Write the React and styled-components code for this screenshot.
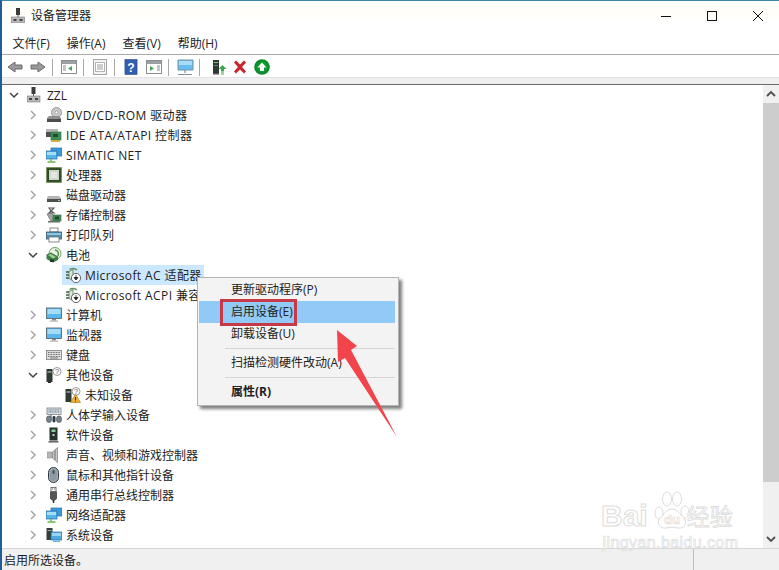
import * as React from 'react'
import styled, { createGlobalStyle } from 'styled-components'

const Global = createGlobalStyle`
  html, body { margin: 0; padding: 0; background: #fff; }
  body { font-family: "Open Sans", "Noto Sans CJK SC", sans-serif; font-size: 12px; color: #1c1c1c; }
`

const Window = styled.div`
  position: relative;
  width: 779px;
  height: 570px;
  overflow: hidden;
  background: #fff;
  box-sizing: border-box;
  border-top: 1px solid #3f86a8;
  border-left: 2px solid #1f5c9c;
  display: flex;
  flex-direction: column;
`

const TitleBar = styled.div`
  height: 29px;
  flex: none;
  display: flex;
  align-items: center;
  padding: 0 0 0 9px;
  background: linear-gradient(#fff 0, #fffef6 40%, #fff 70%);
`

const TitleText = styled.span`
  margin-left: 6px;
  font-size: 12px;
  margin-top: -1px;
`

const Caption = styled.div`
  margin-left: auto;
  margin-right: -2px;
  display: flex;
`

const CaptionButton = styled.div`
  width: 46px;
  height: 29px;
  display: flex;
  align-items: center;
  justify-content: center;
  color: #111;
`

const MenuBar = styled.div`
  height: 22px;
  padding: 2px 0 0 2px;
  flex: none;
  display: flex;
  align-items: center;
  border-bottom: 1px solid #a9a9a9;
`

const MenuName = styled.span`
  padding: 0 8.5px;
  color: #222;
`

const ToolBar = styled.div`
  height: 20px;
  flex: none;
  display: flex;
  align-items: center;
  padding: 2px 0 0 5px;
`

const ToolIcon = styled.span`
  display: flex;
  justify-content: center;
  width: ${p => p.$w}px;
  margin-right: ${p => p.$m}px;
`

const ToolSep = styled.span`
  width: 1px;
  height: 17px;
  background: #a8a8a8;
  margin-right: ${p => p.$m}px;
`

const Band = styled.div`
  height: 6px;
  flex: none;
  background: #efefef;
  border-top: 1px solid #e2e2e2;
  border-bottom: 1px solid #6a6a6a;
`

const Middle = styled.div`
  flex: 1;
  display: flex;
  min-height: 0;
`

const Tree = styled.div`
  flex: 1;
`

const Row = styled.div`
  height: 20px;
  display: flex;
  align-items: center;
  padding-left: ${p => 2 + p.$level * 19}px;
  white-space: nowrap;
`

const Chevron = styled.span`
  width: 20px;
  flex: none;
  display: flex;
  justify-content: center;
  color: ${p => (p.$open ? '#444' : '#a6a6a6')};
`

const Node = styled.span`
  display: flex;
  align-items: center;
  height: 20px;
  padding-right: 2px;
  background: ${p => (p.$selected ? '#cce8ff' : 'transparent')};
`

const IconSlot = styled.span`
  width: 20px;
  flex: none;
  padding-left: 3px;
  display: flex;
`

const Label = styled.span`
  color: #222;
  letter-spacing: ${p => (p.$latin ? '0.4px' : '0')};
`

const ScrollBar = styled.div`
  width: 16px;
  flex: none;
  background: #f0f0f0;
  display: flex;
  flex-direction: column;
  align-items: center;
`

const ScrollButton = styled.div`
  height: 18px;
  width: 100%;
  display: flex;
  align-items: center;
  justify-content: center;
  flex: none;
`

const Thumb = styled.div`
  width: 100%;
  height: 379px;
  background: #cdcdcd;
  flex: none;
`

const ScrollSpace = styled.div`
  flex: 1;
`

const StatusBar = styled.div`
  height: 21px;
  flex: none;
  background: #f0f0f0;
  border-top: 1px solid #d7d7d7;
  margin-left: -2px;
  padding-left: 4px;
  display: grid;
  grid-template-columns: 689px 1fr;
  align-items: center;
`

const StatusCell = styled.span`
  height: 100%;
  display: flex;
  align-items: center;
  &:last-child { border-left: 1px solid #bcbcbc; }
`

const ContextMenu = styled.div`
  position: absolute;
  left: 195px;
  top: 276px;
  width: 200px;
  height: 126px;
  background: #f3f3f3;
  border: 1px solid #b4b4b4;
  box-shadow: 3px 3px 3px rgba(0, 0, 0, 0.5);
  padding-top: 1px;
`

const Item = styled.div`
  position: relative;
  height: 20px;
  padding: 0 0 2px 32px;
  display: flex;
  align-items: center;
  margin: 0 3px 0 1px;
  color: #222;
  font-weight: ${p => (p.$bold ? 700 : 400)};
  background: ${p => (p.$active ? '#91c9f7' : 'transparent')};
`

const ItemSep = styled.div`
  height: 1px;
  margin: 3px 3px 3px 27px;
  background: #d4d4d4;
`

const RedBox = styled.div`
  position: absolute;
  left: 21px;
  top: -2px;
  width: 71px;
  height: 21px;
  border: 3px solid #c63a48;
`

const ArrowMark = styled.svg`
  position: absolute;
  left: 328px;
  top: 320px;
`

const Watermark = styled.div`
  position: absolute;
  left: 596px;
  top: 486px;
  width: 145px;
  display: flex;
  flex-direction: column;
  pointer-events: none;
  color: #fff;
  -webkit-text-stroke: 1px #dcdcdc;
  font-family: "Liberation Sans", "Noto Sans CJK SC", sans-serif;
`

const MarkLine = styled.div`
  display: flex;
  align-items: flex-end;
  height: 46px;
`

const MarkBig = styled.span`
  font-size: 30px;
  font-weight: 700;
  line-height: 34px;
  margin-left: 3px;
`

const MarkCn = styled.span`
  font-size: 23px;
  line-height: 32px;
  margin-left: -3px;
  -webkit-text-stroke: 0.8px #dcdcdc;
`

const MarkUrl = styled.div`
  font-size: 16px;
  line-height: 18px;
  margin-top: 1px;
  letter-spacing: 0.4px;
  text-align: center;
  -webkit-text-stroke: 0.7px #dcdcdc;
`

const Svg = ({ w = 16, h = 16, vb, children }) => (
  <svg width={w} height={h} viewBox={vb || `0 0 ${w} ${h}`} style={{ display: 'block' }}>
    {children}
  </svg>
)

const PcTower = ({ x = 0 }) => (
  <g transform={`translate(${x} 0)`}>
    <rect x="1" y="1" width="6" height="13" fill="#2c3a33" />
    <rect x="2" y="3" width="4" height="1" fill="#7fc48a" />
    <rect x="2" y="6" width="4" height="1" fill="#6c7a74" />
  </g>
)

const icons = {
  root: (
    <>
      <rect x="4.5" y="0" width="4" height="7" fill="#3c3c3c" />
      <rect x="6" y="7" width="1" height="2" fill="#555" />
      <rect x="0" y="9" width="13" height="6" fill="#b9b9b9" stroke="#7a7a7a" strokeWidth="0.6" />
      <rect x="2" y="11" width="3" height="2" fill="#444" />
      <rect x="8" y="11" width="3" height="2" fill="#444" />
    </>
  ),
  dvd: (
    <>
      <circle cx="10.5" cy="5.5" r="5" fill="#c9c9c9" stroke="#9a9a9a" />
      <circle cx="10.5" cy="5.5" r="1.5" fill="#fff" stroke="#8a8a8a" strokeWidth="0.6" />
      <path d="M3 9h10l2 2v4H1v-4z" fill="#8e8e8e" />
      <rect x="1" y="12" width="14" height="3" fill="#4c4c4c" />
    </>
  ),
  ide: (
    <>
      <rect x="0" y="2" width="12" height="3" fill="#b5b5b5" />
      <rect x="0" y="5" width="12" height="5" fill="#4f4f4f" />
      <rect x="5" y="5" width="10" height="8" fill="#3f8f57" stroke="#2f6d3e" strokeWidth="0.6" />
      <rect x="7" y="7" width="5" height="3" fill="#22492c" />
      <rect x="5" y="13" width="9" height="2" fill="#d0b040" />
    </>
  ),
  net: (
    <>
      <rect x="5" y="1" width="11" height="8" fill="#3d9ad9" stroke="#1f6aa6" strokeWidth="0.7" />
      <rect x="0" y="4" width="11" height="8" fill="#57b3ea" stroke="#1f6aa6" strokeWidth="0.7" />
      <rect x="1" y="5" width="9" height="3" fill="#a6dcf6" />
      <path d="M5 12v2M1.5 15h8" stroke="#63b84f" strokeWidth="1.6" />
    </>
  ),
  cpu: (
    <>
      <rect x="0.5" y="0.5" width="15" height="15" fill="#3d5a2b" stroke="#5a7a3a" strokeDasharray="1 1" />
      <rect x="1.5" y="1.5" width="13" height="13" fill="#2e4a22" />
      <rect x="3" y="3" width="10" height="10" fill="#cdd5cc" />
      <rect x="5" y="5" width="6" height="6" fill="#e2e7e1" />
    </>
  ),
  disk: (
    <>
      <path d="M2 9h11l2 2v4H1v-4z" fill="#b4b4b4" />
      <rect x="1" y="12" width="14" height="3" fill="#4e4e4e" />
      <rect x="12" y="13" width="2" height="1" fill="#8adf8a" />
    </>
  ),
  storage: (
    <>
      <path d="M3 1h5l-3 3 3 2H3l2-2z" fill="none" stroke="#555" strokeWidth="1.1" />
      <path d="M1 7l4-1 6 5v3H5z" fill="#a5a5a5" stroke="#5a5a5a" strokeWidth="0.6" />
      <rect x="7" y="8" width="8" height="6" fill="#3f8f57" stroke="#2f6d3e" strokeWidth="0.6" />
      <rect x="9" y="9.5" width="4" height="3" fill="#22492c" />
      <rect x="2" y="14" width="12" height="1.5" fill="#6b6b6b" />
    </>
  ),
  printer: (
    <>
      <rect x="4" y="1" width="8" height="4" fill="#fff" stroke="#6f6f6f" strokeWidth="0.8" />
      <rect x="0.5" y="5" width="15" height="7" fill="#4e93b5" stroke="#36566a" strokeWidth="0.8" />
      <rect x="1" y="6" width="14" height="2" fill="#8fc6dd" />
      <rect x="3" y="10" width="10" height="5" fill="#fff" stroke="#6f6f6f" strokeWidth="0.8" />
    </>
  ),
  battery: (
    <>
      <circle cx="9" cy="6.5" r="6" fill="#e8f3e4" stroke="#6d9f63" />
      <path d="M9 3c3 .5 4 3 3 6" fill="none" stroke="#4d8f45" strokeWidth="1.4" />
      <path d="M0.500 7.500l4.500-2 7 4v3.500l-5 2.500-6.500-3.500z" fill="#3a7e43" />
      <path d="M2 8l3-1 5 3-3 1.500z" fill="#9fd09a" />
      <rect x="4" y="12.500" width="4" height="2.500" fill="#26362a" />
    </>
  ),
  adapter: (
    <>
      <path d="M4.500 2.500C6.500 1 10 1 12 3" fill="none" stroke="#6a8f63" strokeWidth="1.400" />
      <path d="M1 5h3M1 8h3M1 11h3" stroke="#3f5a42" strokeWidth="1.300" />
      <path d="M4 4.500l4-2v11l-4-2z" fill="#dce9d9" stroke="#55775a" strokeWidth="0.800" />
      <circle cx="11" cy="11" r="4.600" fill="#fff" stroke="#666" />
      <path d="M11 8v4M9 10.500l2 2.500 2-2.500z" fill="#222" stroke="#222" strokeWidth="0.800" />
    </>
  ),
  monitor: (
    <>
      <rect x="0.5" y="1" width="15" height="10.5" fill="#59b7ee" stroke="#4d5d68" strokeWidth="0.8" />
      <rect x="1.5" y="2" width="13" height="5" fill="#a6dcf6" />
      <rect x="6" y="12" width="4" height="1.5" fill="#8a8a8a" />
      <rect x="4" y="13.5" width="8" height="1.2" fill="#b2b2b2" />
    </>
  ),
  keyboard: (
    <>
      <rect x="0.5" y="3.5" width="15" height="9" fill="#dedede" stroke="#7d7d7d" strokeWidth="0.8" />
      <path d="M2 5.500h12M2 7.500h12M2 9.500h12" stroke="#6f6f6f" strokeDasharray="1 .6" />
      <rect x="4" y="10.5" width="8" height="1" fill="#7a7a7a" />
    </>
  ),
  other: (
    <>
      <rect x="0.5" y="2" width="6" height="13" fill="#2c3a33" />
      <rect x="1.5" y="4" width="4" height="2" fill="#7c8a84" />
      <rect x="2" y="15" width="3" height="1" fill="#222" />
      <circle cx="11" cy="4.5" r="4" fill="#fff" stroke="#9a9a9a" />
      <text x="11" y="7.3" fontSize="7.5" textAnchor="middle" fill="#555" fontFamily="Liberation Sans">?</text>
    </>
  ),
  unknown: (
    <>
      <rect x="0.5" y="2" width="6" height="13" fill="#2c3a33" />
      <rect x="1.5" y="4" width="4" height="2" fill="#7c8a84" />
      <circle cx="11" cy="4.5" r="4" fill="#fff" stroke="#9a9a9a" />
      <text x="11" y="7.3" fontSize="7.5" textAnchor="middle" fill="#555" fontFamily="Liberation Sans">?</text>
      <path d="M10.5 7l5 8.500h-10z" fill="#f2b233" stroke="#a8741a" strokeWidth="0.6" />
      <rect x="10" y="10" width="1" height="3" fill="#222" />
      <rect x="10" y="13.6" width="1" height="1" fill="#222" />
    </>
  ),
  hid: (
    <>
      <rect x="1" y="1" width="14" height="6.5" fill="#d7dde0" stroke="#7d8488" strokeWidth="0.8" />
      <path d="M2.500 3h11M2.500 5h11" stroke="#5e7482" strokeDasharray="1 .6" />
      <path d="M5 7.500v3" stroke="#555" />
      <rect x="0.5" y="9" width="5" height="6.5" rx="2.4" fill="#76838b" stroke="#3f474c" strokeWidth="0.6" />
      <rect x="6.5" y="9" width="3" height="6.5" rx="1.4" fill="#2f3a42" />
      <rect x="10.5" y="9" width="5" height="6.5" rx="2.4" fill="#76838b" stroke="#3f474c" strokeWidth="0.6" />
    </>
  ),
  software: (
    <>
      <rect x="3.5" y="0.5" width="8" height="13" fill="#25332c" />
      <rect x="5.5" y="2.5" width="4" height="2.5" fill="#8ad09a" />
      <rect x="6.5" y="7" width="2" height="2" fill="#c5d0ca" />
      <rect x="2.5" y="14" width="10" height="1.6" fill="#6d6d6d" />
    </>
  ),
  speaker: (
    <>
      <rect x="1.5" y="5" width="5" height="6" fill="#b5b5b5" stroke="#8a8a8a" strokeWidth="0.6" />
      <path d="M6.500 5l5-4.500v15l-5-4.500z" fill="#c9c9c9" stroke="#7f7f7f" strokeWidth="0.7" />
      <path d="M9 3v10" stroke="#8e8e8e" strokeWidth="1.5" />
    </>
  ),
  mouse: (
    <>
      <rect x="2.5" y="0.5" width="10" height="15" rx="5" fill="#a9b4bc" stroke="#2d3439" />
      <rect x="4" y="2" width="7" height="12" rx="3.5" fill="#8e9aa3" />
      <rect x="6.5" y="3" width="2" height="4" rx="1" fill="#444e55" />
    </>
  ),
  usb: (
    <>
      <rect x="5" y="0.5" width="5" height="4" fill="#fff" stroke="#555" strokeWidth="0.8" />
      <rect x="6" y="1.5" width="1" height="1" fill="#555" />
      <rect x="8" y="1.5" width="1" height="1" fill="#555" />
      <path d="M4 4.500h7v7l-2 2H6l-2-2z" fill="#555" />
      <path d="M7.500 13v3" stroke="#333" strokeWidth="1.6" />
    </>
  ),
  system: (
    <>
      <rect x="0.5" y="1" width="6" height="12" fill="#33403a" />
      <rect x="1.5" y="3" width="4" height="1" fill="#9aa69f" />
      <rect x="5" y="5" width="11" height="8" fill="#4ea9e2" stroke="#2b6f9f" strokeWidth="0.7" />
      <rect x="6" y="6" width="9" height="3" fill="#9ad4f3" />
      <rect x="7" y="13.5" width="7" height="1.5" fill="#6fb4dc" />
    </>
  ),
}

const rows = [
  { level: 0, icon: 'root', label: 'ZZL', open: true },
  { level: 1, icon: 'dvd', label: 'DVD/CD-ROM 驱动器', latin: true },
  { level: 1, icon: 'ide', label: 'IDE ATA/ATAPI 控制器', latin: true },
  { level: 1, icon: 'net', label: 'SIMATIC NET', latin: true },
  { level: 1, icon: 'cpu', label: '处理器' },
  { level: 1, icon: 'disk', label: '磁盘驱动器' },
  { level: 1, icon: 'storage', label: '存储控制器' },
  { level: 1, icon: 'printer', label: '打印队列' },
  { level: 1, icon: 'battery', label: '电池', open: true },
  { level: 2, icon: 'adapter', label: 'Microsoft AC 适配器', latin: true, leaf: true, selected: true },
  { level: 2, icon: 'adapter', label: 'Microsoft ACPI 兼容', latin: true, leaf: true },
  { level: 1, icon: 'monitor', label: '计算机' },
  { level: 1, icon: 'monitor', label: '监视器' },
  { level: 1, icon: 'keyboard', label: '键盘' },
  { level: 1, icon: 'other', label: '其他设备', open: true },
  { level: 2, icon: 'unknown', label: '未知设备', leaf: true },
  { level: 1, icon: 'hid', label: '人体学输入设备' },
  { level: 1, icon: 'software', label: '软件设备' },
  { level: 1, icon: 'speaker', label: '声音、视频和游戏控制器' },
  { level: 1, icon: 'mouse', label: '鼠标和其他指针设备' },
  { level: 1, icon: 'usb', label: '通用串行总线控制器' },
  { level: 1, icon: 'net', label: '网络适配器' },
  { level: 1, icon: 'system', label: '系统设备' },
]

const Arrow = ({ open }) =>
  open ? (
    <Svg w={10} h={10}>
      <path d="M1 3l4 4 4-4" fill="none" stroke="currentColor" strokeWidth="1.5" />
    </Svg>
  ) : (
    <Svg w={10} h={10}>
      <path d="M3 1l4 4-4 4" fill="none" stroke="currentColor" strokeWidth="1.5" />
    </Svg>
  )

const TreeRow = ({ level, icon, label, open, leaf, selected, latin }) => (
  <Row $level={level}>
    <Chevron $open={open}>{leaf ? null : <Arrow open={open} />}</Chevron>
    <Node $selected={selected}>
      <IconSlot>
        <Svg>{icons[icon]}</Svg>
      </IconSlot>
      <Label $latin={latin}>{label}</Label>
    </Node>
  </Row>
)

const tools = [
  {
    w: 16, m: 7,
    svg: <path d="M1 8l7-5v3h7v4H8v3z" fill="#9a9a9a" stroke="#6b6b6b" />,
  },
  {
    w: 16, m: 6,
    svg: <path d="M15 8L8 3v3H1v4h7v3z" fill="#9a9a9a" stroke="#6b6b6b" />,
  },
  { sep: 8 },
  {
    w: 16, m: 6,
    svg: (
      <>
        <rect x="0.5" y="1.5" width="15" height="13" fill="#fff" stroke="#8d8d8d" />
        <rect x="1" y="2" width="14" height="3" fill="#9aa0a6" />
        <path d="M2 7h3M2 9h3M2 11h3" stroke="#8d8d8d" />
        <path d="M11 7v5L7 9.500z" fill="#49a35b" />
      </>
    ),
  },
  { sep: 8 },
  {
    w: 16, m: 6,
    svg: (
      <>
        <rect x="1.5" y="0.5" width="13" height="15" fill="#f4f4f4" stroke="#a3a3a3" />
        <rect x="3.5" y="3.5" width="9" height="9" fill="#fff" stroke="#b5b5b5" />
        <path d="M5 6h6M5 8h6M5 10h6" stroke="#9c9c9c" />
      </>
    ),
  },
  { sep: 9 },
  {
    w: 14, m: 8,
    svg: (
      <>
        <rect x="1" y="0" width="13" height="16" fill="#2f5fb0" stroke="#243f7c" strokeWidth="0.6" />
        <text x="7.5" y="13" fontSize="13" fontWeight="700" fontFamily="Liberation Sans" fill="#fff" textAnchor="middle">?</text>
      </>
    ),
  },
  {
    w: 16, m: 6,
    svg: (
      <>
        <rect x="0.5" y="1.5" width="15" height="13" fill="#fff" stroke="#8d8d8d" />
        <rect x="1" y="2" width="14" height="3" fill="#9aa0a6" />
        <path d="M11 7h3M11 9h3M11 11h3" stroke="#8d8d8d" />
        <path d="M4 7v5l4-2.500z" fill="#49a35b" />
      </>
    ),
  },
  { sep: 7 },
  {
    w: 18, m: 5,
    svg: (
      <>
        <path d="M2 1h15v10H2z" fill="#69bdee" stroke="#6f97ae" />
        <path d="M3 2h13v4H3z" fill="#a9dcf6" />
        <path d="M9 11v3M2 15.500h14" stroke="#7d8f9a" strokeWidth="1.2" />
      </>
    ),
    wide: true,
  },
  { sep: 11 },
  {
    w: 15, m: 6,
    svg: (
      <>
        <PcTower x={1} />
        <rect x="2" y="14" width="6" height="1.5" fill="#555" />
        <path d="M11.500 6l4 4h-2.500v2h-3v-2H7.500z" fill="#3fa34d" />
        <path d="M10 13h3M10 15h3" stroke="#3fa34d" strokeWidth="1.2" />
      </>
    ),
  },
  {
    w: 16, m: 6,
    svg: <path d="M2 3.500L4 1.500l4 4 4-4 2 2-4 4.500 4 4.500-2 2-4-4-4 4-2-2 4-4.500z" fill="#c8252c" />,
  },
  {
    w: 16, m: 0,
    svg: (
      <>
        <circle cx="8" cy="8" r="7.800" fill="#0c8a2c" />
        <circle cx="8" cy="8" r="5.800" fill="#0a9b31" />
        <path d="M8 3.500L12.500 8.500H10v3.500H6V8.500H3.500z" fill="#fff" />
      </>
    ),
  },
]

export default function App() {
  return (
    <Window>
      <Global />
      <TitleBar>
        <Svg w={14} h={15} vb="0 0 13 15">{icons.root}</Svg>
        <TitleText>设备管理器</TitleText>
        <Caption>
          <CaptionButton>
            <Svg w={10} h={10}>
              <path d="M0 5.500h10" stroke="currentColor" />
            </Svg>
          </CaptionButton>
          <CaptionButton>
            <Svg w={10} h={10}>
              <rect x="0.500" y="0.500" width="9" height="9" fill="none" stroke="currentColor" />
            </Svg>
          </CaptionButton>
          <CaptionButton>
            <Svg w={10} h={10}>
              <path d="M0 0l10 10M10 0L0 10" stroke="currentColor" />
            </Svg>
          </CaptionButton>
        </Caption>
      </TitleBar>
      <MenuBar>
        <MenuName>文件(F)</MenuName>
        <MenuName>操作(A)</MenuName>
        <MenuName>查看(V)</MenuName>
        <MenuName>帮助(H)</MenuName>
      </MenuBar>
      <ToolBar>
        {tools.map((t, i) =>
          t.sep ? (
            <ToolSep key={i} $m={t.sep} />
          ) : (
            <ToolIcon key={i} $w={t.w} $m={t.m}>
              <Svg w={t.w} vb={t.wide ? '0 0 18 16' : t.w === 16 ? '0 0 16 16' : '0 0 15 16'}>
                {t.svg}
              </Svg>
            </ToolIcon>
          ),
        )}
      </ToolBar>
      <Band />
      <Middle>
        <Tree>
          {rows.map((r, i) => (
            <TreeRow key={i} {...r} />
          ))}
        </Tree>
        <ScrollBar>
          <ScrollButton>
            <Svg w={10} h={8}>
              <path d="M1 6l4-4 4 4" fill="none" stroke="#505050" strokeWidth="1.800" />
            </Svg>
          </ScrollButton>
          <Thumb />
          <ScrollSpace />
          <ScrollButton>
            <Svg w={10} h={8}>
              <path d="M1 2l4 4 4-4" fill="none" stroke="#505050" strokeWidth="1.800" />
            </Svg>
          </ScrollButton>
        </ScrollBar>
      </Middle>
      <StatusBar>
        <StatusCell>启用所选设备。</StatusCell>
        <StatusCell />
      </StatusBar>

      <ContextMenu>
        <Item>更新驱动程序(P)</Item>
        <Item $active>
          启用设备(E)
          <RedBox />
        </Item>
        <Item>卸载设备(U)</Item>
        <ItemSep />
        <Item>扫描检测硬件改动(A)</Item>
        <ItemSep />
        <Item $bold>属性(R)</Item>
      </ContextMenu>

      <ArrowMark width="80" height="125" viewBox="0 0 80 125">
        <path d="M7 9L27 25 21 29 67 116 15 37 8 41z" fill="#f1444b" />
      </ArrowMark>

      <Watermark>
        <MarkLine>
          <MarkBig>Bai</MarkBig>
          <Svg w={42} h={46}>
            <ellipse cx="11" cy="26" rx="4" ry="6" fill="#fff" stroke="#dcdcdc" />
            <ellipse cx="19" cy="12" rx="4.500" ry="7" fill="#fff" stroke="#dcdcdc" />
            <ellipse cx="29" cy="12" rx="4.500" ry="7" fill="#fff" stroke="#dcdcdc" />
            <ellipse cx="37" cy="25" rx="4" ry="6" fill="#fff" stroke="#dcdcdc" />
            <path d="M24 22c6 0 8 6 12 9 4 5 0 11-6 10-4-1-8-1-12 0-6 1-10-5-6-10 4-3 6-9 12-9z" fill="#fff" stroke="#dcdcdc" />
            <text x="24" y="37" fontSize="13" fontWeight="700" textAnchor="middle" fontFamily="Liberation Sans" fill="#fff" stroke="#dcdcdc" strokeWidth="0.700">du</text>
          </Svg>
          <MarkCn>经验</MarkCn>
        </MarkLine>
        <MarkUrl>jingyan.baidu.com</MarkUrl>
      </Watermark>
    </Window>
  )
}
